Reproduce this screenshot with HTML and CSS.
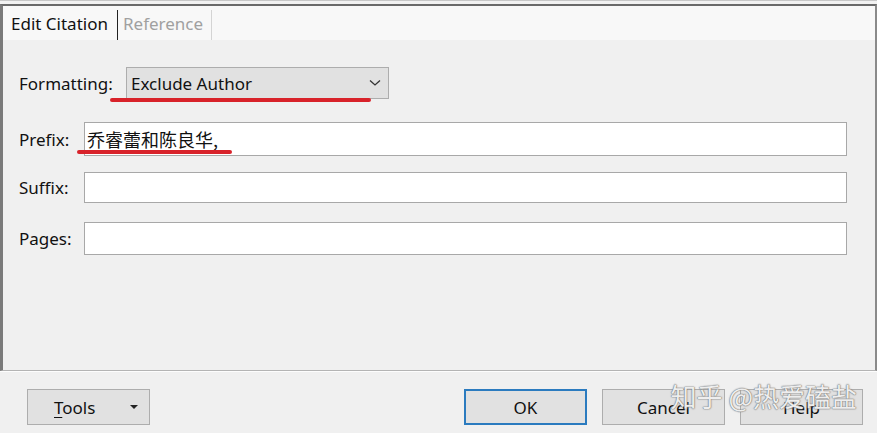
FILE: index.html
```html
<!DOCTYPE html>
<html>
<head>
<meta name="viewport" content="width=device-width, initial-scale=1">
<link rel="stylesheet" href="styles.css">
</head>
<body>

<div class="topedge"></div>

<div class="frame">
  <div class="tabs">
    <span class="tab active">Edit Citation</span>
    <span class="tab">Reference</span>
  </div>

  <div class="panel">
    <div class="row row-format">
      <label class="label">Formatting:</label>
      <div class="select">
        <span>Exclude Author</span>
        <svg class="chev" width="12" height="8" viewBox="0 0 12 8"><path d="M1 1.5 L6 6 L11 1.5" fill="none" stroke="#333" stroke-width="1.3"/></svg>
      </div>
      <span class="mark mark-format"></span>
    </div>

    <div class="row row-prefix">
      <label class="label">Prefix:</label>
      <div class="field cjk">乔睿蕾和陈良华,</div>
      <span class="mark mark-prefix"></span>
    </div>

    <div class="row row-suffix">
      <label class="label">Suffix:</label>
      <div class="field"></div>
    </div>

    <div class="row row-pages">
      <label class="label">Pages:</label>
      <div class="field"></div>
    </div>
  </div>
</div>

<div class="footer">
  <div class="btn tools"><span><u>T</u>ools</span><span class="caret"></span></div>
  <div class="spacer"></div>
  <div class="btn ok">OK</div>
  <div class="btn">Cancel</div>
  <div class="btn">Help</div>
  <span class="watermark">知乎 @热爱磕盐</span>
</div>

</body>
</html>
```

FILE: styles.css
```css
* {
  box-sizing: border-box;
}

body {
  margin: 0;
  width: 877px;
  height: 433px;
  overflow: hidden;
  background: #f0f0f0;
  font-family: "Noto Sans", "Open Sans", sans-serif;
  font-size: 17px;
  color: #111;
  display: flex;
  flex-direction: column;
  position: relative;
}

/* thin strip above the dialog frame */
.topedge {
  height: 4px;
  border-top: 1px solid #c8c8c8;
  background: #f2f2f2;
}

.frame {
  height: 367px;
  border-top: 2px solid #6a6a6a;
  border-left: 3px solid #7a7a7a;
  border-right: 2px solid #8a8a8a;
  border-bottom: 1px solid #b4b4b4;
  display: flex;
  flex-direction: column;
}

/* Tabs */
.tabs {
  height: 34px;
  background: #f8f8f8;
  display: flex;
  align-items: stretch;
}

.tab {
  padding: 0 8px 3px 5px;
  display: flex;
  align-items: center;
  color: #a0a0a0;
  border-right: 1px solid #d4d4d4;
  margin: 4px 0 0;
}

.tab.active {
  color: #111;
  border-right: 1px solid #222;
  padding: 0 9px 3px 8px;
}

/* Form panel */
.panel {
  flex: 1;
  background: #f0f0f0;
  padding: 27px 28px 0 16px;
}

.row {
  display: flex;
  align-items: center;
  position: relative;
}

.label {
  width: 65px;
  flex: none;
}

.row-format {
  height: 32px;
}

.row-format .label {
  width: 107px;
}

.select {
  width: 263px;
  height: 32px;
  background: #e1e1e1;
  border: 1px solid #adadad;
  display: flex;
  align-items: center;
  justify-content: space-between;
  padding: 0 7px 0 4px;
}

.chev {
  margin-top: -1px;
}

.field {
  flex: 1;
  background: #fff;
  border: 1px solid #a8a8a8;
  height: 31px;
  padding: 0 2px;
  display: flex;
  align-items: center;
}

.cjk {
  font-family: "Noto Sans CJK SC", "Noto Sans", sans-serif;
  font-size: 18px;
  color: #111;
}

.row-prefix {
  margin-top: 23px;
}

.row-prefix .field {
  height: 34px;
}

.row-suffix {
  margin-top: 16px;
}

.row-pages {
  margin-top: 19px;
}

.row-pages .field {
  height: 33px;
}

/* red hand-drawn underlines */
.mark {
  position: absolute;
  height: 4px;
  background: #d8222a;
  border-radius: 3px;
}

.mark-format {
  left: 91px;
  width: 261px;
  top: 31px;
}

.mark-prefix {
  left: 58px;
  width: 155px;
  top: 28px;
}

/* Footer buttons */
.footer {
  flex: 1;
  display: flex;
  align-items: flex-start;
  gap: 15px;
  padding: 17px 14px 0 27px;
  border-top: 1px solid #fdfdfd;
  background: #f0f0f0;
}

.btn {
  width: 123px;
  height: 36px;
  background: #e1e1e1;
  border: 1px solid #adadad;
  display: flex;
  align-items: center;
  justify-content: center;
  color: #111;
}

.btn.ok {
  border: 2px solid #2b7bbf;
}

.tools {
  justify-content: space-between;
  padding: 0 11px 0 26px;
}

.tools u {
  text-underline-offset: 3px;
}

.caret {
  width: 0;
  height: 0;
  border-left: 4px solid transparent;
  border-right: 4px solid transparent;
  border-top: 4px solid #222;
}

.spacer {
  flex: 1;
}

.watermark {
  position: absolute;
  right: 20px;
  bottom: 19px;
  font-family: "Noto Sans CJK SC", "Noto Sans", sans-serif;
  font-size: 26px;
  color: rgba(255, 255, 255, 0.88);
  text-shadow: 0 0 1px #777, 0 0 1px #777, 0 0 2px #999;
}
```
